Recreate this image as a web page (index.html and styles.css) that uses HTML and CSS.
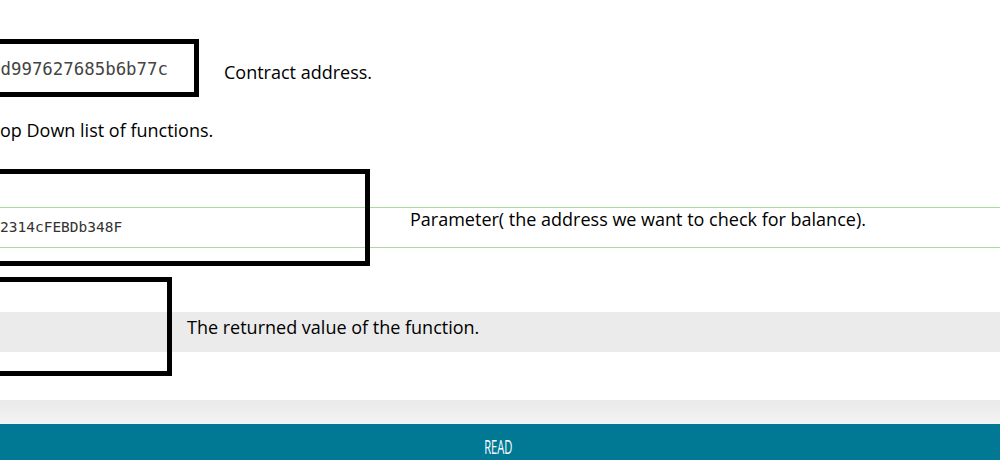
FILE: index.html
```html
<!DOCTYPE html>
<html>
<head>
<meta charset="utf-8">
<link rel="stylesheet" href="styles.css">
</head>
<body>
<div class="page">
  <section class="sec sec-a">
    <div class="addr"><span>d997627685b6b77c</span></div>
    <div class="label label-a">Contract address.</div>
    <div class="mark mark-a"></div>
  </section>

  <div class="label note">op Down list of functions.</div>

  <section class="sec sec-b">
    <div class="param-strip">
      <div class="param-value">2314cFEBDb348F</div>
      <div class="label label-b">Parameter( the address we want to check for balance).</div>
    </div>
    <div class="mark mark-b"></div>
  </section>

  <section class="sec sec-c">
    <div class="result-band">
      <div class="label label-c">The returned value of the function.</div>
    </div>
    <div class="mark mark-c"></div>
  </section>

  <div class="footer-shade"></div>
  <div class="read-bar"><span class="read-text">READ</span></div>
</div>
</body>
</html>
```

FILE: styles.css
```css
html, body {
  margin: 0;
  padding: 0;
  background: #fff;
}
.page {
  width: 1000px;
  height: 460px;
  overflow: hidden;
  font-family: "Open Sans", "Noto Sans", "DejaVu Sans", sans-serif;
  color: #000;
}
.sec {
  position: relative;
}
.label {
  font-size: 18px;
  line-height: 22px;
  white-space: nowrap;
}
.mark {
  position: absolute;
  top: 0;
  left: -10px;
  border: 5px solid #000;
  box-sizing: border-box;
  pointer-events: none;
}

/* Section A : contract address */
.sec-a {
  margin-top: 39px;
  height: 58px;
  display: flex;
  align-items: center;
}
.addr {
  width: 168px;
  display: flex;
  justify-content: flex-end;
  overflow: hidden;
  font-family: "DejaVu Sans Mono", "Liberation Mono", monospace;
  font-size: 17.4px;
  color: #444;
  white-space: nowrap;
  padding-top: 2px;
}
.label-a {
  margin-left: 56px;
  padding-top: 8px;
}
.mark-a {
  width: 209px;
  height: 58px;
}

/* drop down note */
.note {
  margin-top: 22px;
  height: 22px;
}

/* Section B : parameter */
.sec-b {
  margin-top: 28px;
  height: 97px;
  padding-top: 38px;
  box-sizing: border-box;
}
.param-strip {
  height: 41px;
  box-sizing: border-box;
  border-top: 1px solid #a9d99f;
  border-bottom: 1px solid #a9d99f;
  display: flex;
  align-items: flex-start;
}
.param-value {
  width: 410px;
  font-family: "DejaVu Sans Mono", "Liberation Mono", monospace;
  font-size: 14.5px;
  color: #333;
  padding-top: 10px;
  line-height: 18px;
  white-space: nowrap;
}
.label-b {
  padding-top: 0;
}
.mark-b {
  width: 380px;
  height: 97px;
}

/* Section C : returned value */
.sec-c {
  margin-top: 11px;
  height: 99px;
  padding-top: 35px;
  box-sizing: border-box;
}
.result-band {
  height: 40px;
  background: #ebebeb;
  display: flex;
  align-items: center;
  padding-left: 187px;
}
.label-c {
  margin-top: -11px;
}
.mark-c {
  width: 182px;
  height: 99px;
}

/* footer */
.footer-shade {
  margin-top: 24px;
  height: 24px;
  background: linear-gradient(#e9e9e9, #f4f4f4);
}
.read-bar {
  height: 36px;
  background: #017894;
  display: flex;
  justify-content: center;
  align-items: flex-end;
  padding-right: 4px;
}
.read-text {
  display: inline-block;
  color: #fff;
  font-size: 20px;
  line-height: 22px;
  margin-bottom: 2px;
  transform: scaleX(0.56);
}
```
